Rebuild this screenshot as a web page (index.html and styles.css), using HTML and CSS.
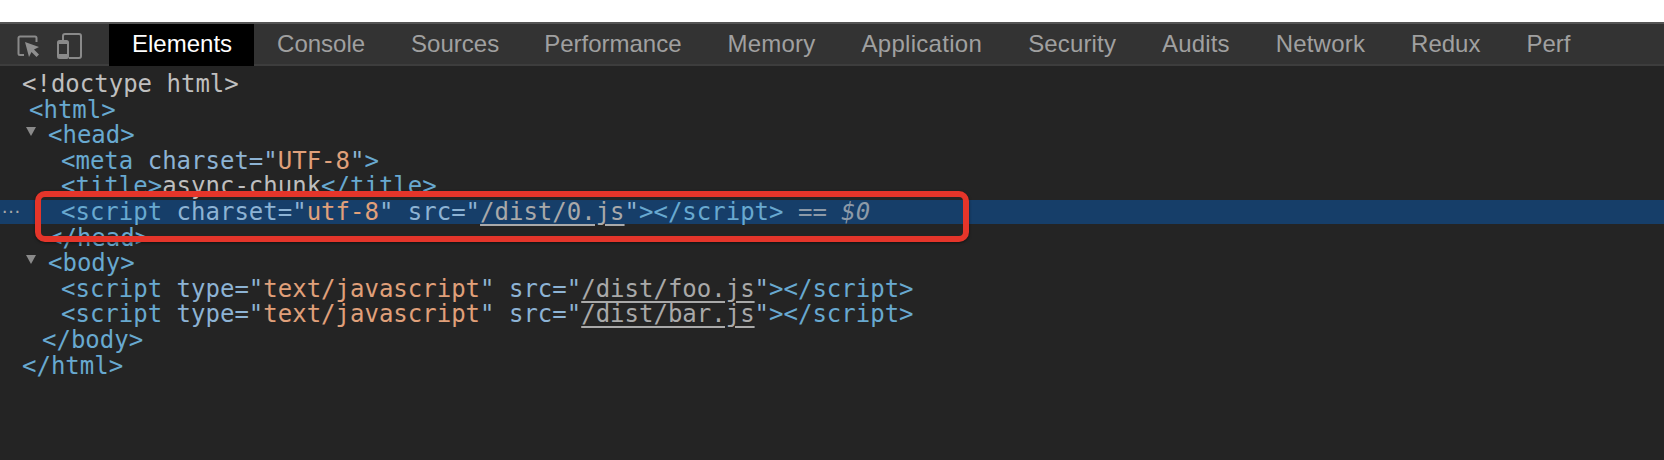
FILE: index.html
```html
<!DOCTYPE html>
<html lang="en">
<head>
<meta charset="utf-8">
<title>DevTools</title>
<link rel="stylesheet" href="styles.css">
</head>
<body>
<div class="devtools">
  <div class="toolbar">
    <div class="tools">
      <svg class="ico-inspect" width="22" height="22" viewBox="0 0 22 22" fill="none">
        <path d="M7 20H3a1.500 1.500 0 0 1-1.500-1.500V3A1.500 1.500 0 0 1 3 1.500h15A1.500 1.500 0 0 1 19.500 3v4" stroke="#8a8a8a" stroke-width="2"/>
        <path d="M8 7l14 5-5 2.500 5 5-2.500 2.500-5-5L12 22z" fill="#8f8f8f"/>
      </svg>
      <svg class="ico-device" width="25" height="26" viewBox="0 0 25 26" fill="none">
        <path d="M6 7V3a2 2 0 0 1 2-2h14a2 2 0 0 1 2 2v20a2 2 0 0 1-2 2H12" stroke="#8a8a8a" stroke-width="2"/>
        <rect x="1" y="8" width="10" height="17" rx="1.500" stroke="#8a8a8a" stroke-width="2"/>
        <rect x="1" y="21" width="10" height="4" fill="#8a8a8a"/>
        <rect x="1" y="8" width="10" height="3" fill="#8a8a8a"/>
      </svg>
    </div>
    <div class="tab active tight">Elements</div>
    <div class="tab">Console</div>
    <div class="tab tight">Sources</div>
    <div class="tab">Performance</div>
    <div class="tab wide">Memory</div>
    <div class="tab xwide">Application</div>
    <div class="tab loose">Security</div>
    <div class="tab loose">Audits</div>
    <div class="tab wide">Network</div>
    <div class="tab">Redux</div>
    <div class="tab">Perf</div>
  </div>
  <div class="tree">
    <div class="row in-a plain">&lt;!doctype html&gt;</div>
    <div class="row in-b tag">&lt;html&gt;</div>
    <div class="row in-c tag"><span class="arrow"></span>&lt;head&gt;</div>
    <div class="row in-d"><span class="tag">&lt;meta </span><span class="attr">charset=</span><span class="attr">"</span><span class="val">UTF-8</span><span class="attr">"</span><span class="tag">&gt;</span></div>
    <div class="row in-d"><span class="tag">&lt;title&gt;</span><span class="plain">async-chunk</span><span class="tag">&lt;/title&gt;</span></div>
    <div class="row in-d selected"><span class="dots">…</span><span class="tag">&lt;script </span><span class="attr">charset=</span><span class="attr">"</span><span class="val">utf-8</span><span class="attr">" src=</span><span class="attr">"</span><a class="link">/dist/0.js</a><span class="attr">"</span><span class="tag">&gt;&lt;/script&gt;</span><span class="marker"> == <i>$0</i></span></div>
    <div class="row in-c tag">&lt;/head&gt;</div>
    <div class="row in-c tag"><span class="arrow"></span>&lt;body&gt;</div>
    <div class="row in-d"><span class="tag">&lt;script </span><span class="attr">type=</span><span class="attr">"</span><span class="val">text/javascript</span><span class="attr">" src=</span><span class="attr">"</span><a class="link">/dist/foo.js</a><span class="attr">"</span><span class="tag">&gt;&lt;/script&gt;</span></div>
    <div class="row in-d"><span class="tag">&lt;script </span><span class="attr">type=</span><span class="attr">"</span><span class="val">text/javascript</span><span class="attr">" src=</span><span class="attr">"</span><a class="link">/dist/bar.js</a><span class="attr">"</span><span class="tag">&gt;&lt;/script&gt;</span></div>
    <div class="row in-e tag">&lt;/body&gt;</div>
    <div class="row in-a tag">&lt;/html&gt;</div>
    <div class="callout"></div>
  </div>
</div>
</body>
</html>
```
FILE: styles.css
```css
* { box-sizing: border-box; }
html, body { margin: 0; height: 100%; background: #fff; }
body { padding-top: 22px; overflow: hidden; }
.devtools { height: 438px; background: #242424; border-top: 2px solid #555; }
.toolbar {
  display: flex;
  height: 42px;
  background: #333;
  border-bottom: 2px solid #3d3d3d;
  font: 24px "Liberation Sans", Arial, sans-serif;
  color: #a0a0a0;
}
.tools { width: 109px; flex: none; display: flex; align-items: flex-start; padding: 9px 0 0 17px; gap: 18px; }
.ico-inspect { margin-top: 2px; }
.tab { padding: 0 23px; line-height: 39px; height: 42px; flex: none; }
.tab.active { background: #000; color: #fff; }
.tab.tight { padding-right: 22px; }
.tab.wide { letter-spacing: .2px; }
.tab.xwide { letter-spacing: .3px; }
.tab.loose { letter-spacing: .15px; }
.tree {
  position: relative;
  padding-top: 6px;
  font: 24px "DejaVu Sans Mono", monospace;
  color: #68a9d0;
}
.row { height: 25.6px; line-height: 25.6px; position: relative; white-space: pre; }
.in-a { padding-left: 22px; }
.in-b { padding-left: 29px; }
.in-c { padding-left: 48px; }
.in-d { padding-left: 61px; }
.in-e { padding-left: 42px; }
.plain { color: #bfbfbf; }
.tag { color: #68a9d0; }
.attr { color: #8db3d4; }
.val { color: #e0a07a; }
.link { color: #a9a9a9; text-decoration: underline; text-underline-offset: 4px; }
.arrow {
  position: absolute;
  left: 26px;
  top: 4px;
  border-left: 5.500px solid transparent;
  border-right: 5.500px solid transparent;
  border-top: 9px solid #8a8a8a;
}
.selected {
  height: 24px;
  line-height: 24px;
  margin-bottom: 1.600px;
  background: #163e69;
}
.dots { position: absolute; left: 1px; top: -6px; font: 20px/24px "Liberation Sans", sans-serif; color: #a8a8a8; }
.marker { color: #8d9aa8; }
.callout {
  position: absolute;
  left: 35px;
  top: 125px;
  width: 934px;
  height: 51px;
  border: 6px solid #e5352a;
  border-radius: 10px;
  box-shadow: 0 1px 3px rgba(0, 0, 0, .5);
}
```
